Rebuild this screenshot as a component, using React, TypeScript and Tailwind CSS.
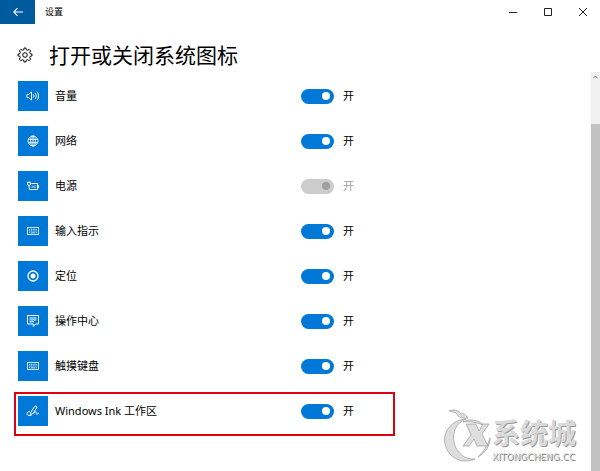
import { useState } from "react"
import type { ReactNode } from "react"

type SystemIcon = {
  id: string
  label: string
  icon: ReactNode
  disabled?: boolean
  highlighted?: boolean
}

const KeyboardIcon = () => (
  <svg viewBox="0 0 14 14" className="size-3.5" fill="none" stroke="currentColor" strokeWidth="0.8">
    <rect x="1.4" y="3.4" width="11.2" height="7" />
    <path d="M3 5.4h8M3 7h8" strokeDasharray="1.2 0.6" />
    <path d="M3 8.8h1.2M5 8.8h4M9.8 8.8H11" />
  </svg>
)

const VolumeIcon = () => (
  <svg viewBox="0 0 14 14" className="size-3.5" fill="none" stroke="currentColor" strokeWidth="0.9">
    <path d="M1 5.3h1.8L5.5 3v8L2.8 8.7H1z" />
    <path d="M7.3 5.3a2.6 2.6 0 0 1 0 3.4M9.2 4a4.6 4.6 0 0 1 0 6M11 2.7a6.5 6.5 0 0 1 0 8.6" />
  </svg>
)

const GlobeIcon = () => (
  <svg viewBox="0 0 14 14" className="size-3.5" fill="none" stroke="currentColor" strokeWidth="0.9">
    <circle cx="7" cy="7" r="5" />
    <ellipse cx="7" cy="7" rx="2.3" ry="5" />
    <path d="M2.4 5.3h9.2M2.4 8.7h9.2M7 2v10" />
  </svg>
)

const PowerIcon = () => (
  <svg viewBox="0 0 14 14" className="size-3.5" fill="none" stroke="currentColor" strokeWidth="1">
    <path d="M5.5 4.5h6v6h-8V9" />
    <path d="M12.5 6v3" />
    <path d="M1.5 5V3.5h3V5a1.5 1.5 0 0 1-3 0zM2 3.5v-1M4 3.500v-1M3 6.500V9" />
    <path d="M5.500 6.500h4.500v2.500H5.500z" fill="currentColor" stroke="none" opacity="0.4" />
  </svg>
)

const LocationIcon = () => (
  <svg viewBox="0 0 14 14" className="size-3.5">
    <circle cx="7" cy="7" r="5" fill="none" stroke="currentColor" strokeWidth="1.3" />
    <circle cx="7" cy="7" r="2.5" fill="currentColor" />
  </svg>
)

const ActionIcon = () => (
  <svg viewBox="0 0 14 14" className="size-3.5" fill="none" stroke="currentColor" strokeWidth="1">
    <path d="M1.5 1.5h11V10h-3l-2.200 2.500V10H1.500z" />
    <path d="M3.500 4h7M3.500 5.900h7M3.500 7.800h4.500" />
  </svg>
)

const InkIcon = () => (
  <svg viewBox="0 0 14 14" className="size-3.5" fill="none" stroke="currentColor" strokeWidth="1" strokeLinecap="round" strokeLinejoin="round">
    <path d="M5 8 8.600 2.600c.9-1.200 2.900-.2 2.100 1.300L7 9.500l-2.300 1z" />
    <path d="M3.600 7.600C1.700 7.600.8 9 1.100 10.300c.5 1.500 2.500 1.500 4.200.8" />
    <path d="M7 9.500c.9-1 1.900-2 2.900-1.800 1 .3-.3 2 .7 2.400.7.200 1.500-.4 2.100-.9" />
  </svg>
)

const GearIcon = () => (
  <svg viewBox="0 0 16 16" className="size-4" fill="none" stroke="currentColor" strokeWidth="1" strokeLinejoin="round">
    <path d="M6.800 2.700 7.100 1h1.800l.3 1.700 1.500.6 1.400-1 1.600 1.600-1 1.400.6 1.500 1.700.3v1.800l-1.700.3-.6 1.500 1 1.400-1.600 1.600-1.400-1-1.500.6-.3 1.700H7.100l-.3-1.700-1.500-.6-1.400 1-1.600-1.600 1-1.400-.6-1.500L1 8.900V7.100l1.700-.3.6-1.500-1-1.400 1.600-1.600 1.400 1z" />
    <circle cx="8" cy="8" r="2.300" />
  </svg>
)

const systemIcons: SystemIcon[] = [
  { id: "volume", label: "音量", icon: <VolumeIcon /> },
  { id: "network", label: "网络", icon: <GlobeIcon /> },
  { id: "power", label: "电源", icon: <PowerIcon />, disabled: true },
  { id: "input", label: "输入指示", icon: <KeyboardIcon /> },
  { id: "location", label: "定位", icon: <LocationIcon /> },
  { id: "action", label: "操作中心", icon: <ActionIcon /> },
  { id: "touch", label: "触摸键盘", icon: <KeyboardIcon /> },
  { id: "ink", label: "Windows Ink 工作区", icon: <InkIcon />, highlighted: true },
]

const TitleBar = () => (
  <header className="flex h-6 items-stretch justify-between">
    <div className="flex items-center gap-[10px]">
      <button type="button" aria-label="返回" className="flex h-6 w-[35px] items-center justify-center bg-[#005a9e] text-white">
        <svg viewBox="0 0 10 10" className="size-2.5" fill="none" stroke="currentColor" strokeWidth="1.1">
          <path d="M10 5H1M4.500 1.200.8 5l3.700 3.800" />
        </svg>
      </button>
      <span className="text-[9px] leading-6">设置</span>
    </div>
    <div className="flex text-[#222]">
      <button type="button" aria-label="最小化" className="flex w-[35px] items-center justify-center">
        <svg viewBox="0 0 8 8" className="size-2" stroke="currentColor"><path d="M0 4.500h8" /></svg>
      </button>
      <button type="button" aria-label="最大化" className="flex w-[35px] items-center justify-center">
        <svg viewBox="0 0 8 8" className="size-2" fill="none" stroke="currentColor"><path d="M.5.5h7v7h-7z" /></svg>
      </button>
      <button type="button" aria-label="关闭" className="flex w-[35px] items-center justify-center">
        <svg viewBox="0 0 8 8" className="size-2" stroke="currentColor"><path d="m0 0 8 8M8 0 0 8" /></svg>
      </button>
    </div>
  </header>
)

const IconRow = ({ item }: { item: SystemIcon }) => {
  const [on, setOn] = useState(true)

  return (
    <li className={`flex h-11 w-[381px] items-start border-2 pt-[2px] pl-[2px] ${item.highlighted ? "border-[#dc0010]" : "border-transparent"}`}>
      <div className="flex h-[30px] items-center">
        <span className="flex size-[30px] items-center justify-center bg-[#0078d7] text-white">{item.icon}</span>
        <label htmlFor={item.id} className="ml-[7px] w-[246px] text-[11px] leading-4">{item.label}</label>
        <input
          id={item.id}
          type="checkbox"
          role="switch"
          checked={on}
          disabled={item.disabled}
          onChange={() => setOn(!on)}
          className="flex h-[15px] w-[33px] appearance-none items-center rounded-full bg-gray-400 px-1 before:size-2 before:rounded-full before:bg-white checked:justify-end checked:bg-[#0078d7] disabled:bg-[#cccccc] disabled:before:bg-[#a0a0a0]"
        />
        <span className={`ml-[9px] text-[11px] leading-4 ${item.disabled ? "text-[#a0a0a0]" : ""}`}>{on ? "开" : "关"}</span>
      </div>
    </li>
  )
}

const Watermark = () => (
  <div className="absolute right-6 bottom-2 flex items-end gap-px text-[#dadada]">
    <svg viewBox="0 0 50 56" className="h-14 w-[50px]" fill="#dedede" stroke="#999999" strokeWidth="0.7">
      <path d="M8 4c5-2 10-1 12 3 3-1 5 1 7 4-6 1-10-1-12-5-3-1-5-2-7-2z" />
      <path d="M25 12C11 13 1 25 4 37c3 13 16 21 30 15-10 1-19-6-21-17-2-10 2-19 12-23z" />
      <path d="M22 15c8-4 16-2 22 4-6-3-14-5-22-4zM49 31c0 8-4 14-12 19 5-5 9-10 12-19z" />
      <path d="M25 17h10l3 7 4-7h6l-7 10 6 12H36l-3-7-5 7h-6l8-11z" />
    </svg>
    <div className="flex flex-col font-['Liberation_Sans','Noto_Sans_CJK_SC',sans-serif]">
      <span className="text-[28px] leading-8 font-bold [text-shadow:1px_1px_0_#999]">系统城</span>
      <span className="font-['DejaVu_Sans',sans-serif] text-[9px] leading-3 [text-shadow:1px_1px_0_#777]">XITONGCHENG.CC</span>
    </div>
  </div>
)

export default function App() {
  return (
    <div className="relative flex min-h-screen flex-col bg-white font-['Noto_Sans','Noto_Sans_CJK_SC',sans-serif] text-black">
      <TitleBar />
      <div className="flex grow">
        <main className="grow">
          <h1 className="flex h-[53px] items-center gap-4 pt-2 pl-[17px] text-[21px] leading-8">
            <GearIcon />
            打开或关闭系统图标
          </h1>
          <ul className="flex flex-col gap-px pl-[14px]">
            {systemIcons.map(item => <IconRow key={item.id} item={item} />)}
          </ul>
        </main>
        <div aria-hidden="true" className="mt-12 flex w-[9px] flex-col bg-[#f0f0f0]">
          <div className="flex h-[52px] justify-center pt-[3px] text-[#808080]">
            <svg viewBox="0 0 5 4" className="h-1 w-[5px]" fill="none" stroke="currentColor"><path d="M.5 3.300 2.500 1l2 2.300" /></svg>
          </div>
          <div className="grow bg-[#c2c2c2]" />
        </div>
      </div>
      <Watermark />
    </div>
  )
}
